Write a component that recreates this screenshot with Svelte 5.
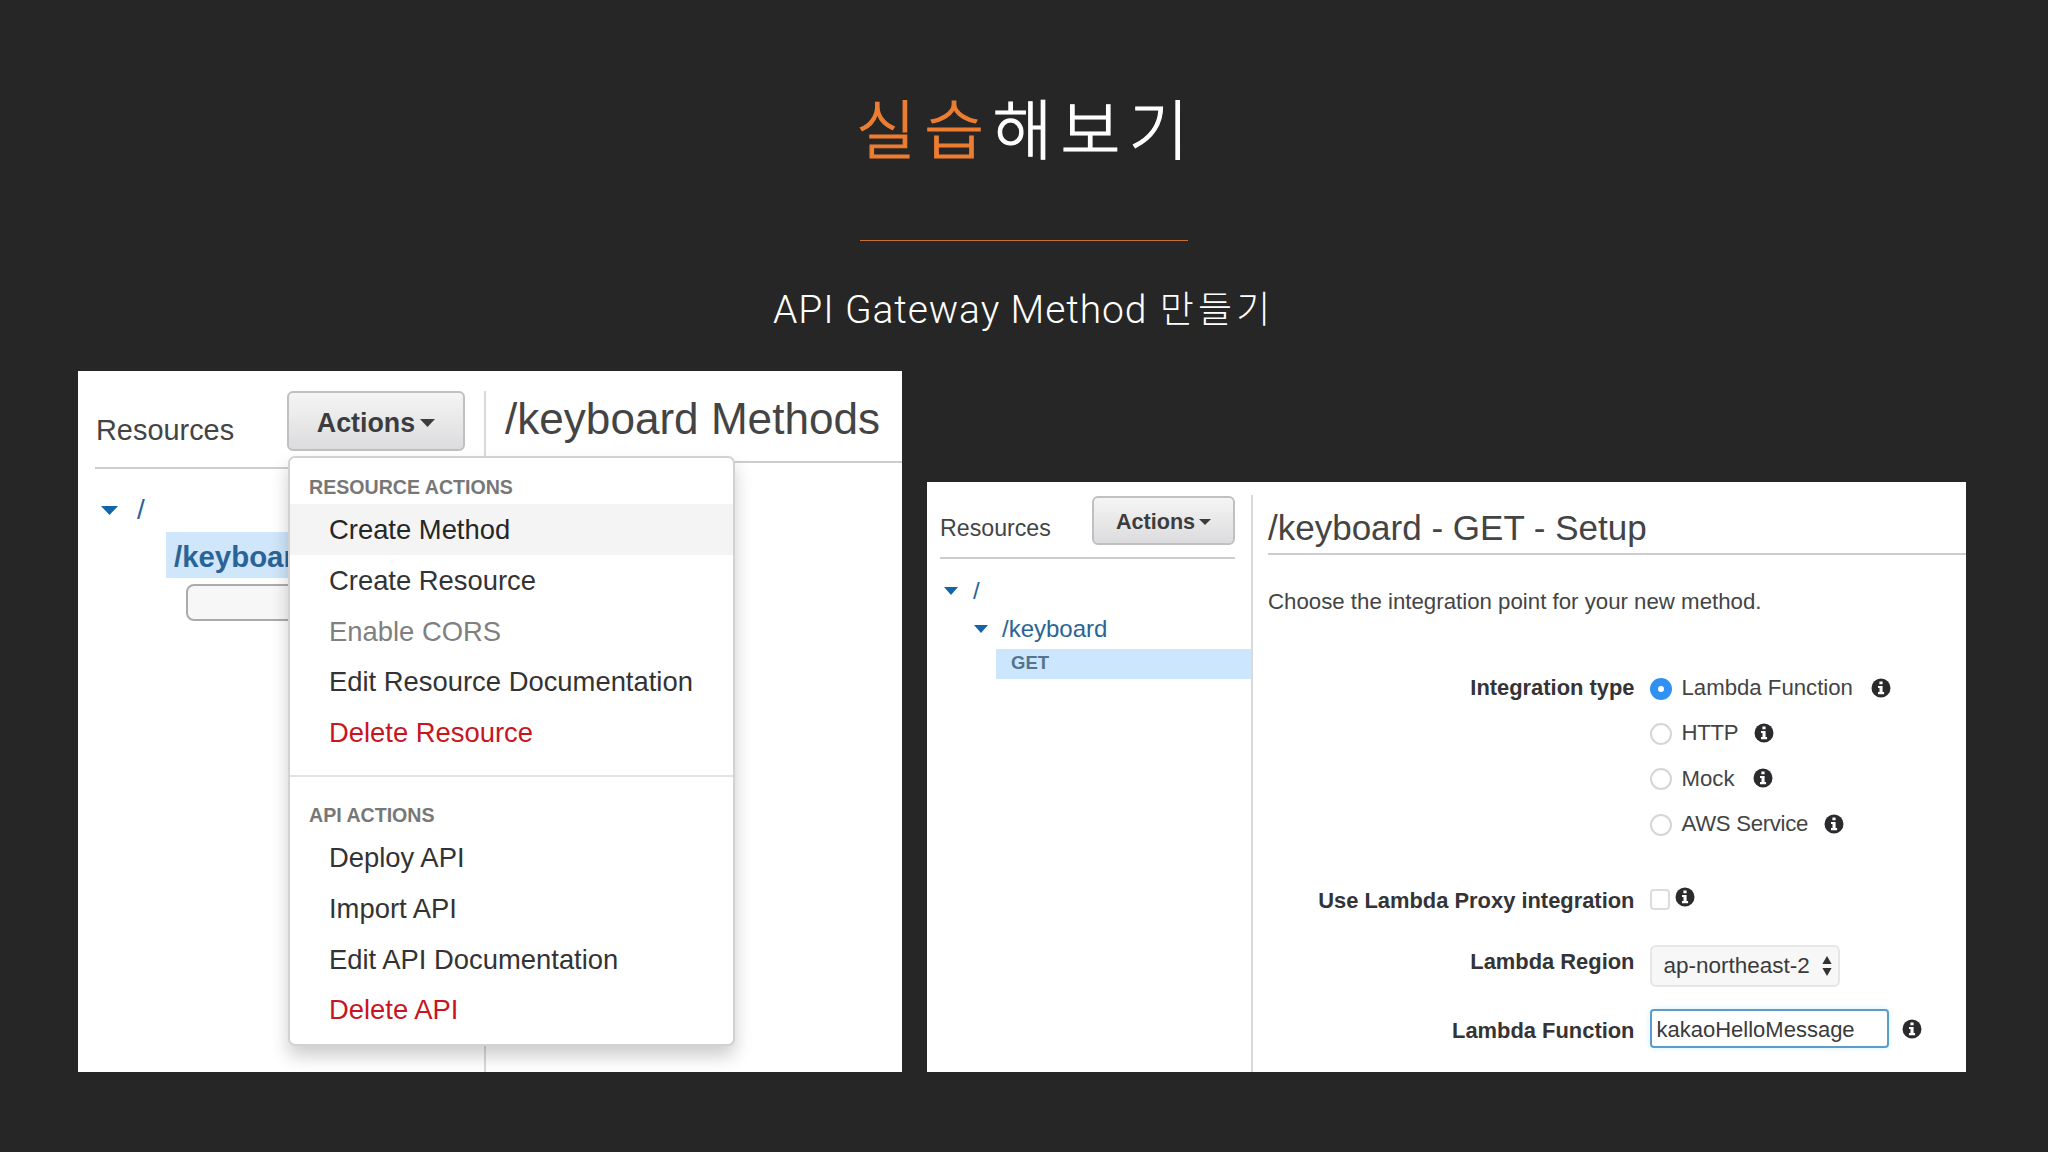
<script>
    const resourceActions = [
        { label: 'Create Method', kind: 'active' },
        { label: 'Create Resource', kind: '' },
        { label: 'Enable CORS', kind: 'disabled' },
        { label: 'Edit Resource Documentation', kind: '' },
        { label: 'Delete Resource', kind: 'danger' },
    ];

    const apiActions = [
        { label: 'Deploy API', kind: '' },
        { label: 'Import API', kind: '' },
        { label: 'Edit API Documentation', kind: '' },
        { label: 'Delete API', kind: 'danger' },
    ];

    const integrationTypes = ['Lambda Function', 'HTTP', 'Mock', 'AWS Service'];

    let selectedType = $state('Lambda Function');
    let lambdaFunction = $state('kakaoHelloMessage');
</script>

{#snippet caret(width, height)}
    <svg class="caret" {width} {height} viewBox="0 0 16 9" preserveAspectRatio="none">
        <path d="M0 0h16L8 9z" fill="currentColor" />
    </svg>
{/snippet}

{#snippet info()}
    <svg class="info" width="20" height="20" viewBox="0 0 20 20">
        <circle cx="10" cy="10" r="9.5" fill="#2b2b2e" />
        <path d="M8.4 3.4h3.2v2.8H8.4zM7 7.9h4.6v6.2h1.5v2.2H7v-2.2h1.5V10H7z" fill="#fff" />
    </svg>
{/snippet}

<div class="slide">
    <h1><span>실습</span>해보기</h1>
    <div class="line"></div>
    <p class="subtitle">API Gateway Method <span>만들기</span></p>

    <div class="shots">
        <section class="panel methods">
            <aside>
                <header>
                    <span class="name">Resources</span>
                    <div class="dropdown">
                        <button class="actions">Actions {@render caret(15, 8)}</button>
                        <div class="menu">
                            <h3>RESOURCE ACTIONS</h3>
                            {#each resourceActions as item}
                                <div class="item {item.kind}">{item.label}</div>
                            {/each}
                            <hr>
                            <h3>API ACTIONS</h3>
                            {#each apiActions as item}
                                <div class="item {item.kind}">{item.label}</div>
                            {/each}
                        </div>
                    </div>
                </header>
                <div class="node root">{@render caret(17, 9)} <span>/</span></div>
                <div class="node current">/keyboard</div>
                <div class="method-select"></div>
            </aside>
            <main>
                <h2>/keyboard Methods</h2>
            </main>
        </section>

        <section class="panel setup">
            <aside>
                <header>
                    <span class="name">Resources</span>
                    <button class="actions">Actions {@render caret(12, 6)}</button>
                </header>
                <div class="node root">{@render caret(14, 8)} <span>/</span></div>
                <div class="node child">{@render caret(14, 8)} <span>/keyboard</span></div>
                <div class="node get">GET</div>
            </aside>
            <main>
                <h2>/keyboard - GET - Setup</h2>
                <p>Choose the integration point for your new method.</p>

                <div class="row types">
                    <div class="label">Integration type</div>
                    <div class="options">
                        {#each integrationTypes as type}
                            <label>
                                <input type="radio" bind:group={selectedType} value={type}>
                                <span class:tight={type === 'HTTP' || type === 'AWS Service'}>{type}</span>
                                {@render info()}
                            </label>
                        {/each}
                    </div>
                </div>
                <div class="row proxy">
                    <div class="label">Use Lambda Proxy integration</div>
                    <input type="checkbox">
                    {@render info()}
                </div>
                <div class="row region">
                    <div class="label">Lambda Region</div>
                    <div class="select">
                        <span>ap-northeast-2</span>
                        <svg width="10" height="20" viewBox="0 0 10 20">
                            <path d="M5 0l4.6 8H.4zM5 20l4.6-8H.4z" fill="#333" />
                        </svg>
                    </div>
                </div>
                <div class="row function">
                    <div class="label">Lambda Function</div>
                    <input type="text" bind:value={lambdaFunction}>
                    {@render info()}
                </div>
            </main>
        </section>
    </div>
</div>

<style>
    :global(body) {
        margin: 0;
        background: #262626;
    }

    .slide {
        box-sizing: border-box;
        width: 2048px;
        height: 1152px;
        padding-top: 80px;
        overflow: hidden;
        background: #262626;
        color: #fff;
        font-family: 'Liberation Sans', Arial, sans-serif;
    }

    h1, h2, h3, p {
        margin: 0;
        font-weight: normal;
    }

    h1 {
        height: 92px;
        padding-left: 856px;
        font-family: 'Noto Sans CJK KR', sans-serif;
        font-size: 65px;
        font-weight: 300;
        line-height: 92px;
        letter-spacing: 8.4px;
        white-space: nowrap;
        -webkit-text-stroke: 1.2px currentColor;
    }

    h1 span {
        color: #ed7d31;
    }

    .line {
        width: 328px;
        height: 1px;
        margin: 68px 0 0 860px;
        background: #c87035;
    }

    .subtitle {
        height: 60px;
        margin-top: 36px;
        padding-left: 773px;
        font-family: Roboto, 'Noto Sans CJK KR', sans-serif;
        font-size: 39px;
        font-weight: 300;
        line-height: 60px;
        letter-spacing: 0.9px;
        white-space: nowrap;
    }

    .subtitle span {
        margin-left: 2px;
        font-family: 'Noto Sans CJK KR', sans-serif;
        font-size: 37px;
        letter-spacing: 4.2px;
    }

    .shots {
        display: flex;
        align-items: flex-end;
        gap: 25px;
        height: 701px;
        margin: 34px 0 0 78px;
    }

    .panel {
        display: flex;
        flex-shrink: 0;
        background: #fff;
        color: #444;
    }

    aside {
        box-sizing: border-box;
        flex-shrink: 0;
        border-right: 2px solid #d9d9db;
    }

    main {
        flex: 1;
        min-width: 0;
    }

    header {
        display: flex;
        justify-content: space-between;
        box-sizing: border-box;
        border-bottom: 2px solid #cdcdcf;
    }

    h2 {
        box-sizing: border-box;
        white-space: nowrap;
        border-bottom: 2px solid #cdcdcf;
    }

    .actions {
        display: flex;
        align-items: center;
        justify-content: center;
        box-sizing: border-box;
        padding: 0;
        border: 2px solid #c0c0c2;
        border-radius: 6px;
        background: linear-gradient(#f5f5f5, #dcdcde);
        color: #3c3c3e;
        font-family: inherit;
        font-weight: bold;
    }

    .node {
        display: flex;
        align-items: center;
        color: #2a6496;
    }

    .node .caret {
        color: #1464a8;
    }

    /* resource tree with the open menu */
    .methods {
        width: 824px;
        height: 701px;
    }

    .methods aside {
        width: 408px;
        height: 681px;
        margin-top: 20px;
        padding-left: 17px;
    }

    .methods header {
        width: 370px;
        height: 78px;
    }

    .methods .name {
        margin: 19px 0 0 1px;
        font-size: 28.9px;
        line-height: 40px;
    }

    .dropdown {
        position: relative;
        width: 178px;
    }

    .methods .actions {
        gap: 5px;
        width: 178px;
        height: 60px;
        padding-top: 4px;
        font-size: 26.8px;
    }

    .menu {
        position: absolute;
        z-index: 1;
        top: 65px;
        left: 1px;
        box-sizing: border-box;
        width: 447px;
        height: 590px;
        padding-top: 12px;
        border: 2px solid #d2d2d5;
        border-radius: 7px;
        background: #fff;
        box-shadow: 0 10px 18px rgba(0, 0, 0, 0.2);
    }

    h3 {
        height: 34px;
        padding-left: 19px;
        color: #777;
        font-size: 19.6px;
        font-weight: bold;
        line-height: 34px;
    }

    .item {
        height: 50.8px;
        padding-left: 39px;
        color: #333;
        font-size: 27.4px;
        line-height: 52.6px;
        white-space: nowrap;
    }

    .item.active {
        background: #f4f4f5;
        color: #262626;
    }

    .item.disabled {
        color: #808080;
    }

    .item.danger {
        color: #c7161f;
    }

    .menu hr {
        height: 2px;
        margin: 17px 0 21px;
        border: 0;
        background: #e2e2e5;
    }

    .methods .node {
        font-size: 28px;
    }

    .methods .root {
        gap: 19px;
        height: 40px;
        margin: 21px 0 0 6px;
    }

    .methods .current {
        box-sizing: border-box;
        height: 46px;
        margin: 2px 0 0 71px;
        padding: 3px 0 0 8px;
        background: #cfe6fb;
        font-size: 29.4px;
        font-weight: bold;
    }

    .method-select {
        box-sizing: border-box;
        width: 200px;
        height: 37px;
        margin: 6px 0 0 91px;
        border: 2px solid #ababad;
        border-radius: 8px;
        background: #f7f7f7;
    }

    .methods h2 {
        height: 92px;
        margin-left: 19px;
        font-size: 44.1px;
        line-height: 96px;
    }

    /* GET method setup form */
    .setup {
        width: 1039px;
        height: 590px;
    }

    .setup aside {
        width: 326px;
        height: 577px;
        margin-top: 13px;
        padding-left: 13px;
    }

    .setup header {
        width: 295px;
        height: 64px;
        padding-top: 1px;
    }

    .setup .name {
        margin-top: 17px;
        font-size: 23.2px;
        line-height: 31px;
    }

    .setup .actions {
        gap: 4px;
        width: 143px;
        height: 49px;
        padding-top: 2px;
        font-size: 21.6px;
    }

    .setup .node {
        font-size: 24px;
    }

    .setup .root {
        gap: 15px;
        height: 38px;
        margin: 13px 0 0 4px;
    }

    .setup .child {
        gap: 14px;
        height: 38px;
        margin-left: 34px;
    }

    .setup .get {
        height: 30px;
        margin: 1px 0 0 56px;
        padding-left: 15px;
        background: #cce6fd;
        color: #54738f;
        font-size: 18.5px;
        font-weight: bold;
        line-height: 28px;
        align-items: flex-start;
    }

    .setup main {
        padding-left: 15px;
        font-size: 22.2px;
    }

    .setup h2 {
        height: 73px;
        font-size: 35px;
        line-height: 92px;
    }

    .setup p {
        height: 30px;
        margin-top: 31px;
        line-height: 32px;
        font-size: 22.25px;
        white-space: nowrap;
    }

    .row {
        display: flex;
        align-items: center;
    }

    .row .label {
        flex-shrink: 0;
        width: 366.5px;
        margin-right: 15px;
        color: #343436;
        font-size: 21.9px;
        font-weight: bold;
        text-align: right;
        white-space: nowrap;
    }

    .types {
        align-items: flex-start;
        margin-top: 49px;
    }

    .types .label,
    .options label {
        height: 45.4px;
        line-height: 45.4px;
    }

    .options label {
        display: flex;
        align-items: center;
    }

    .options span {
        margin: 0 18px 0 10px;
    }

    .options .tight {
        margin-right: 16px;
        letter-spacing: -0.3px;
    }

    input {
        box-sizing: border-box;
        margin: 0;
        appearance: none;
        background: #fff;
    }

    input[type="radio"] {
        position: relative;
        top: 1px;
        width: 22px;
        height: 22px;
        border: 2px solid #d6d6d8;
        border-radius: 50%;
    }

    input[type="radio"]:checked {
        border: 8px solid #3191f2;
    }

    input[type="checkbox"] {
        width: 20px;
        height: 21px;
        margin: 0 5px 2px 0;
        border: 2px solid #dcdcde;
        border-radius: 4px;
    }

    .info {
        flex-shrink: 0;
    }

    .proxy {
        height: 46px;
        margin-top: 31px;
    }

    .proxy .info {
        margin-bottom: 7px;
    }

    .region {
        align-items: flex-start;
        height: 42px;
        margin-top: 21px;
    }

    .region .label {
        line-height: 33px;
    }

    .select {
        display: flex;
        align-items: center;
        justify-content: space-between;
        box-sizing: border-box;
        width: 190px;
        height: 42px;
        padding: 1px 6px 0 12px;
        border: 2px solid #e6e6e8;
        border-radius: 6px;
        background: #f7f7f8;
        color: #3a3a3c;
        font-size: 22.5px;
    }

    .function {
        height: 40px;
        margin-top: 22px;
    }

    .function .label {
        padding-top: 4px;
    }

    input[type="text"] {
        width: 239px;
        height: 39px;
        margin-right: 13px;
        padding: 2px 4px 0 5px;
        border: 2px solid #5b9cc9;
        border-radius: 4px;
        box-shadow: 0 0 6px #d3effa;
        color: #3a3a3c;
        font-family: inherit;
        font-size: 22px;
    }
</style>
